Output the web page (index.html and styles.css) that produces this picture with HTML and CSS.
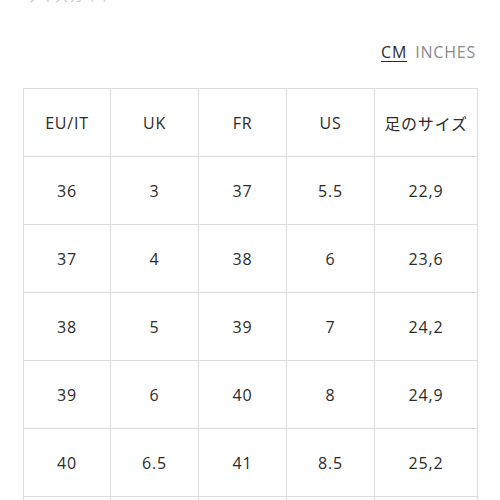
FILE: index.html
```html
<!DOCTYPE html>
<html lang="ja">
<head>
<meta charset="utf-8">
<link rel="stylesheet" href="styles.css">
</head>
<body>
<div class="page">
  <div class="crumb"><span>サイズガイド</span></div>
  <div class="units"><span class="unit active">CM</span> <span class="unit">INCHES</span></div>
  <table class="sizes">
    <colgroup>
      <col class="c1"><col class="c2"><col class="c3"><col class="c4"><col class="c5">
    </colgroup>
    <thead>
      <tr><th>EU/IT</th><th>UK</th><th>FR</th><th>US</th><th>足のサイズ</th></tr>
    </thead>
    <tbody>
      <tr><td>36</td><td>3</td><td>37</td><td>5.5</td><td>22,9</td></tr>
      <tr><td>37</td><td>4</td><td>38</td><td>6</td><td>23,6</td></tr>
      <tr><td>38</td><td>5</td><td>39</td><td>7</td><td>24,2</td></tr>
      <tr><td>39</td><td>6</td><td>40</td><td>8</td><td>24,9</td></tr>
      <tr><td>40</td><td>6.5</td><td>41</td><td>8.5</td><td>25,2</td></tr>
      <tr class="more"><td></td><td></td><td></td><td></td><td></td></tr>
    </tbody>
  </table>
</div>
</body>
</html>
```

FILE: styles.css
```css
html, body {
  margin: 0;
  padding: 0;
  background: #ffffff;
}
body {
  font-family: "Open Sans", "Noto Sans CJK JP", sans-serif;
  color: #2b2b2b;
  overflow: hidden;
  height: 500px;
}
.page {
  padding: 0 23px;
}
.crumb {
  height: 4px;
  overflow: hidden;
  padding-left: 2px;
}
.crumb span {
  display: block;
  font-size: 14px;
  line-height: 14px;
  margin-top: -11px;
  color: #cfcfcf;
  letter-spacing: 1px;
}
.units {
  margin-top: 37px;
  text-align: right;
  font-size: 16px;
  line-height: 22px;
  letter-spacing: 0.8px;
  padding-right: 1px;
}
.unit {
  color: #8a8a8a;
}
.unit.active {
  color: #2b2b2b;
  text-decoration: underline;
  text-underline-offset: 3px;
  text-decoration-thickness: 1px;
  margin-right: 3px;
}
.sizes {
  margin-top: 25px;
  border-collapse: collapse;
  table-layout: fixed;
  width: 454px;
}
.c1 { width: 87px; }
.c2 { width: 88px; }
.c3 { width: 88px; }
.c4 { width: 88px; }
.c5 { width: 103px; }
.sizes th,
.sizes td {
  border: 1px solid #dcdcdc;
  height: 67px;
  padding: 0;
  text-align: center;
  vertical-align: middle;
  font-size: 16px;
  font-weight: 400;
  letter-spacing: 0.8px;
  color: #2b2b2b;
}
```
